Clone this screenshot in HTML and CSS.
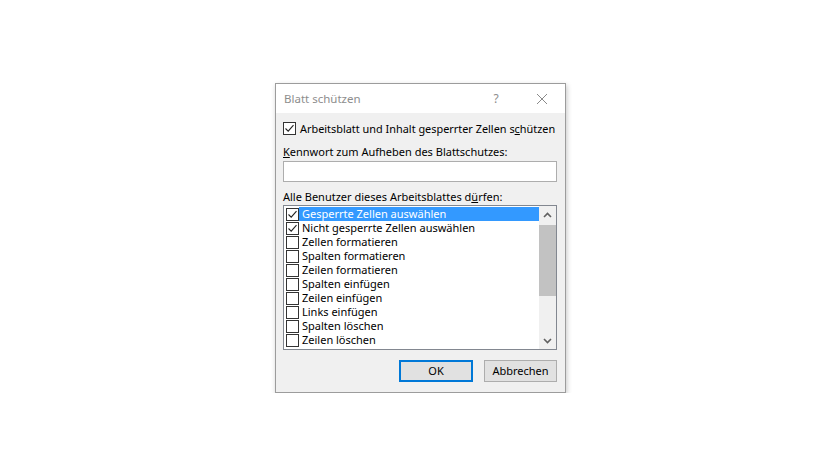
FILE: index.html
```html
<!DOCTYPE html>
<html lang="de">
<head>
<meta charset="utf-8">
<title>Blatt schützen</title>
<link rel="stylesheet" href="styles.css">
</head>
<body>
<div class="desk">
  <div class="dialog">
    <div class="titlebar">
      <span class="title">Blatt schützen</span>
      <span class="help">?</span>
      <span class="close"><svg width="12" height="12" viewBox="0 0 12 12"><path d="M1 1L11 11M11 1L1 11" stroke="#8a8a8a" stroke-width="1" fill="none"/></svg></span>
    </div>
    <div class="content">
      <div class="row main-check">
        <span class="cb"><svg width="13" height="13" viewBox="0 0 13 13"><path d="M2.5 6.5L5.2 9.2L10.5 3.2" stroke="#222" stroke-width="1.1" fill="none"/></svg></span>
        <span class="rowtxt">Arbeitsblatt und Inhalt gesperrter Zellen s<u>c</u>hützen</span>
      </div>
      <div class="label"><u>K</u>ennwort zum Aufheben des Blattschutzes:</div>
      <div class="input"></div>
      <div class="label label2">Alle Benutzer dieses Arbeitsblattes d<u>ü</u>rfen:</div>
      <div class="listbox">
        <div class="items">
          <div class="item sel"><span class="cb"><svg width="13" height="13" viewBox="0 0 13 13"><path d="M2.5 6.5L5.2 9.2L10.5 3.2" stroke="#222" stroke-width="1.1" fill="none"/></svg></span><span class="txt">Gesperrte Zellen auswählen</span></div>
          <div class="item"><span class="cb"><svg width="13" height="13" viewBox="0 0 13 13"><path d="M2.5 6.5L5.2 9.2L10.5 3.2" stroke="#222" stroke-width="1.1" fill="none"/></svg></span><span class="txt">Nicht gesperrte Zellen auswählen</span></div>
          <div class="item"><span class="cb"></span><span class="txt">Zellen formatieren</span></div>
          <div class="item"><span class="cb"></span><span class="txt">Spalten formatieren</span></div>
          <div class="item"><span class="cb"></span><span class="txt">Zeilen formatieren</span></div>
          <div class="item"><span class="cb"></span><span class="txt">Spalten einfügen</span></div>
          <div class="item"><span class="cb"></span><span class="txt">Zeilen einfügen</span></div>
          <div class="item"><span class="cb"></span><span class="txt">Links einfügen</span></div>
          <div class="item"><span class="cb"></span><span class="txt">Spalten löschen</span></div>
          <div class="item"><span class="cb"></span><span class="txt">Zeilen löschen</span></div>
        </div>
        <div class="scrollbar">
          <div class="arrow"><svg width="9" height="6" viewBox="0 0 9 6"><path d="M1 5L4.5 1.5L8 5" stroke="#606060" stroke-width="1.6" fill="none"/></svg></div>
          <div class="track"><div class="thumb"></div></div>
          <div class="arrow"><svg width="9" height="6" viewBox="0 0 9 6"><path d="M1 1L4.5 4.5L8 1" stroke="#606060" stroke-width="1.6" fill="none"/></svg></div>
        </div>
      </div>
      <div class="buttons">
        <div class="btn default">OK</div>
        <div class="btn">Abbrechen</div>
      </div>
    </div>
  </div>
</div>
</body>
</html>
```
FILE: styles.css
```css
html, body {
  margin: 0;
  background: #fff;
}
.desk {
  padding: 83px 0 0 275px;
}
.dialog {
  width: 291px;
  height: 310px;
  box-sizing: border-box;
  border: 1px solid #9c9c9c;
  background: #f0f0f0;
  box-shadow: 1px 2px 5px rgba(0,0,0,0.22);
  font-family: "Noto Sans", "DejaVu Sans", sans-serif;
  font-size: 11px;
  color: #000;
}
.titlebar {
  height: 29px;
  background: #fff;
  display: flex;
  align-items: center;
  padding-left: 8px;
}
.title {
  flex: 1;
  color: #8d8d8d;
  font-size: 11.5px;
}
.help {
  width: 46px;
  text-align: center;
  color: #8d8d8d;
  font-size: 12px;
}
.close {
  width: 46px;
  display: flex;
  justify-content: center;
}
.content {
  padding: 8px 8px 0 7px;
  display: flex;
  flex-direction: column;
}
.row {
  display: flex;
  align-items: center;
  height: 14px;
  gap: 4px;
}
.rowtxt {
  white-space: nowrap;
  font-size: 10.9px;
}
.cb {
  width: 11px;
  height: 11px;
  border: 1px solid #333;
  background: #fff;
  display: flex;
  flex: none;
  position: relative;
}
.cb svg {
  position: absolute;
  left: -1px;
  top: -1px;
}
.label {
  height: 14px;
  line-height: 14px;
  margin-top: 10px;
  white-space: nowrap;
}
.label2 {
  margin-top: 8px;
}
.input {
  margin-top: 2px;
  height: 19px;
  border: 1px solid #adadad;
  background: #fff;
}
.listbox {
  margin-top: 1px;
  height: 143px;
  border: 1px solid #828790;
  background: #fff;
  display: flex;
}
.items {
  flex: 1;
  padding: 1px 0 0 2px;
}
.item {
  height: 14px;
  display: flex;
  align-items: center;
}
.item .txt {
  height: 14px;
  line-height: 14px;
  padding-left: 3px;
  flex: 1;
  white-space: nowrap;
}
.item.sel .txt {
  background: #3399ff;
  color: #fff;
}
.scrollbar {
  width: 17px;
  display: flex;
  flex-direction: column;
  background: #f0f0f0;
}
.arrow {
  height: 17px;
  display: flex;
  align-items: center;
  justify-content: center;
}
.track {
  flex: 1;
  padding-top: 2px;
}
.thumb {
  height: 71px;
  background: #c2c2c2;
}
.buttons {
  margin-top: 10px;
  display: flex;
  justify-content: flex-end;
  gap: 11px;
}
.btn {
  width: 71px;
  height: 20px;
  line-height: 20px;
  border: 1px solid #adadad;
  background: #e1e1e1;
  text-align: center;
}
.btn.default {
  width: 70px;
  height: 18px;
  line-height: 18px;
  border: 2px solid #0078d7;
}
```
